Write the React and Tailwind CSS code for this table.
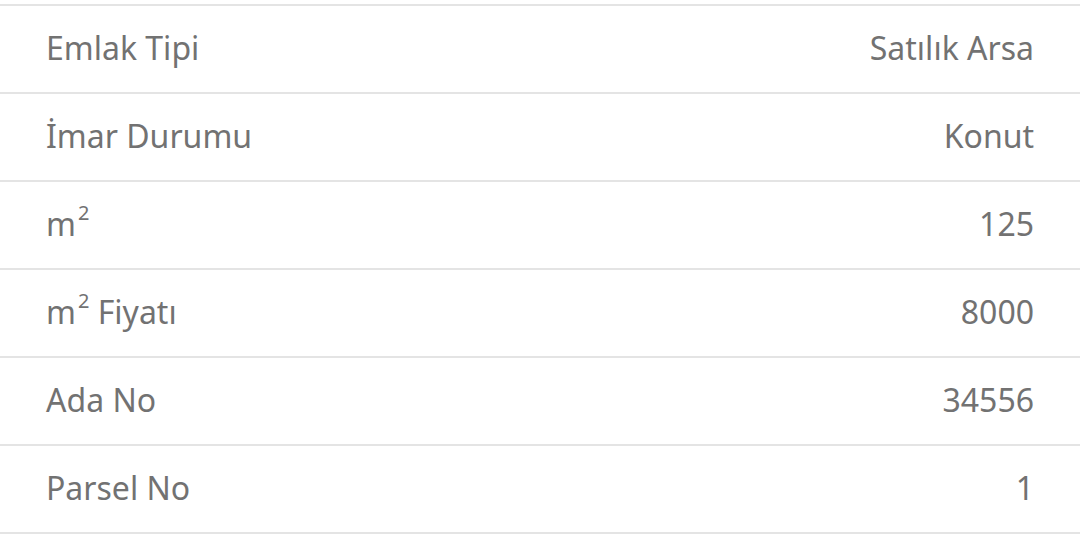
import React from 'react';

const Sq = () => <sup className="text-[20px] align-super relative -top-[4px] ml-[2px]">2</sup>;

const rows = [
    { label: 'Emlak Tipi', value: 'Satılık Arsa' },
    { label: 'İmar Durumu', value: 'Konut' },
    { label: <>m<Sq /></>, value: '125' },
    { label: <>m<Sq /> Fiyatı</>, value: '8000' },
    { label: 'Ada No', value: '34556' },
    { label: 'Parsel No', value: '1' },
];

const App = () => {
    return (
        <div className="bg-white w-[1080px] h-[535px] pt-[4px] overflow-hidden" style={{ fontFamily: '"Noto Sans", Roboto, sans-serif' }}>
            <div className="border-t-2 border-[#e4e4e4]">
                {rows.map((row, i) => (
                    <div
                        key={i}
                        className="h-[88px] flex items-center justify-between px-[46px] pb-[3px] border-b-2 border-[#e4e4e4] text-[32px] font-normal text-[#727272] leading-none"
                    >
                        <span>{row.label}</span>
                        <span>{row.value}</span>
                    </div>
                ))}
            </div>
        </div>
    );
};

export default App;
